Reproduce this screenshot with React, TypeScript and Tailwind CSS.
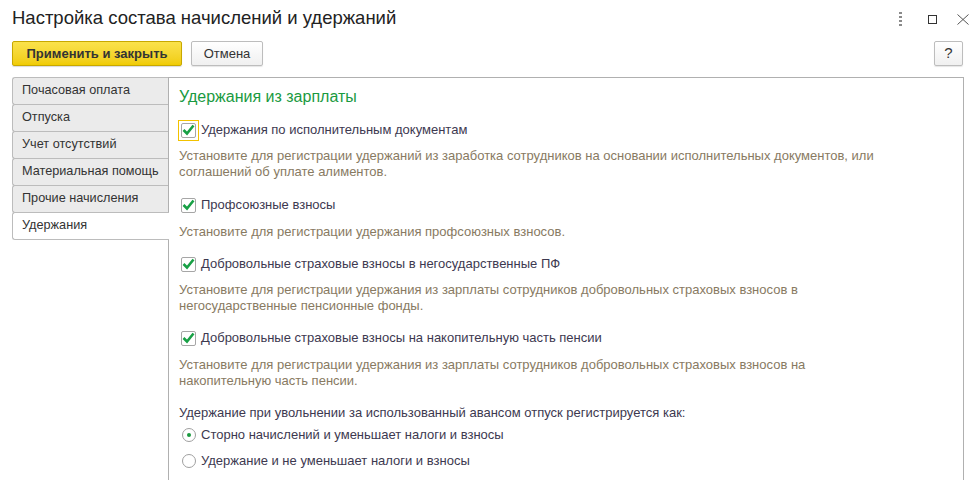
import React from "react";

const tabs = [
  "Почасовая оплата",
  "Отпуска",
  "Учет отсутствий",
  "Материальная помощь",
  "Прочие начисления",
  "Удержания",
];

const CheckBox = ({ focused }: { focused?: boolean }) => (
  <div
    className={`w-[21px] h-[21px] flex items-center justify-center border ${
      focused ? "border-[#f2c200]" : "border-transparent"
    }`}
  >
    <div className="w-[15px] h-[15px] rounded-[2px] border border-[#a6a6a6] bg-white flex items-center justify-center">
      <svg width="13" height="12" viewBox="0 0 13 12">
        <path d="M1.5 6 L5 9.5 L11.5 1.5" fill="none" stroke="#18a045" strokeWidth="2.6" />
      </svg>
    </div>
  </div>
);

const Radio = ({ checked }: { checked?: boolean }) => (
  <div className="w-[21px] h-[22px] flex items-center justify-center">
    <div className="w-[14px] h-[14px] rounded-full border border-[#9f9f9f] bg-white flex items-center justify-center">
      {checked && <div className="w-[4px] h-[4px] rounded-full bg-[#1a9a3f]" />}
    </div>
  </div>
);

const CheckRow = ({ label, focused }: { label: string; focused?: boolean }) => (
  <div className="flex items-center h-[22px] ml-[-1px]">
    <CheckBox focused={focused} />
    <span className="ml-[2px] text-[13px] leading-[16px] text-[#3d3950]">{label}</span>
  </div>
);

const Hint = ({ children, gap = "mt-[7px]" }: { children: React.ReactNode; gap?: string }) => (
  <p className={`${gap} text-[13px] leading-[16px] text-[#887a62] whitespace-nowrap`}>{children}</p>
);

export default function App() {
  return (
    <div className="w-[973px] h-[480px] overflow-hidden bg-white font-['Liberation_Sans',Arial,sans-serif]">
      {/* Header */}
      <div className="flex items-start justify-between h-[34px]">
        <h1 className="pl-[12px] pt-[6px] text-[18.5px] leading-[24px] text-[#222]">
          Настройка состава начислений и удержаний
        </h1>
        <div className="flex items-center pt-[12px] pr-[4px]">
          <div className="flex flex-col gap-[2px] w-[3px] mr-[26px]">
            <span className="w-[3px] h-[2px] bg-[#8a8a8a]" />
            <span className="w-[3px] h-[2px] bg-[#8a8a8a]" />
            <span className="w-[3px] h-[2px] bg-[#8a8a8a]" />
            <span className="w-[3px] h-[2px] bg-[#8a8a8a]" />
          </div>
          <div className="w-[9px] h-[9px] border border-[#333] mr-[20px]" />
          <svg width="12" height="11" viewBox="0 0 12 11">
            <path d="M0.5 0.5 L11.5 10.5 M11.5 0.5 L0.5 10.5" stroke="#555" strokeWidth="1" />
          </svg>
        </div>
      </div>

      {/* Command bar */}
      <div className="flex items-center h-[25px] mt-[7px] pl-[12px] pr-[10px]">
        <button className="h-[25px] w-[170px] rounded-[2px] border border-[#c8a800] bg-gradient-to-b from-[#fbe24a] to-[#f0cc00] text-[13px] font-bold text-[#333] shadow-[0_1px_1px_rgba(0,0,0,0.15)]">
          Применить и закрыть
        </button>
        <button className="ml-[9px] h-[25px] w-[72px] rounded-[2px] border border-[#bdbdbd] bg-gradient-to-b from-white to-[#f0f0f0] text-[13px] text-[#333] shadow-[0_1px_1px_rgba(0,0,0,0.1)]">
          Отмена
        </button>
        <button className="ml-auto h-[25px] w-[29px] rounded-[2px] border border-[#bdbdbd] bg-gradient-to-b from-white to-[#f0f0f0] text-[15px] text-[#333] shadow-[0_1px_1px_rgba(0,0,0,0.1)]">
          ?
        </button>
      </div>

      {/* Panel */}
      <div className="flex mt-[11px] pl-[12px]">
        <div className="w-[156px] shrink-0 flex flex-col">
          {tabs.map((t, i) => {
            const active = i === tabs.length - 1;
            return (
              <div
                key={t}
                className={`h-[28px] flex items-center pl-[9px] text-[12.7px] text-[#333] whitespace-nowrap rounded-l-[3px] border border-[#bcbcbc] border-r-0 ${
                  active ? "bg-white -mr-[1px] relative z-10" : "bg-[#ebebeb]"
                } ${i > 0 ? "-mt-[1px]" : ""}`}
              >
                {t}
              </div>
            );
          })}
        </div>

        <div className="w-[796px] h-[420px] border border-[#b0b0b0] pl-[10px] pt-[9px]">
          <h2 className="text-[16px] leading-[20px] text-[#1a9a3f]">Удержания из зарплаты</h2>

          <div className="mt-[12px]">
            <CheckRow label="Удержания по исполнительным документам" focused />
            <Hint>
              Установите для регистрации удержаний из заработка сотрудников на основании исполнительных документов, или
              <br />
              соглашений об уплате алиментов.
            </Hint>
          </div>

          <div className="mt-[14px]">
            <CheckRow label="Профсоюзные взносы" />
            <Hint gap="mt-[8px]">Установите для регистрации удержания профсоюзных взносов.</Hint>
          </div>

          <div className="mt-[13px]">
            <CheckRow label="Добровольные страховые взносы в негосударственные ПФ" />
            <Hint>
              Установите для регистрации удержания из зарплаты сотрудников добровольных страховых взносов в
              <br />
              негосударственные пенсионные фонды.
            </Hint>
          </div>

          <div className="mt-[13px]">
            <CheckRow label="Добровольные страховые взносы на накопительную часть пенсии" />
            <Hint gap="mt-[8px]">
              Установите для регистрации удержания из зарплаты сотрудников добровольных страховых взносов на
              <br />
              накопительную часть пенсии.
            </Hint>
          </div>

          <p className="mt-[16px] text-[13px] leading-[16px] text-[#3d3950]">
            Удержание при увольнении за использованный авансом отпуск регистрируется как:
          </p>
          <div className="mt-[3px] flex items-center h-[22px] ml-[-1px]">
            <Radio checked />
            <span className="ml-[2px] text-[13px] leading-[16px] text-[#3d3950]">
              Сторно начислений и уменьшает налоги и взносы
            </span>
          </div>
          <div className="mt-[4px] flex items-center h-[22px] ml-[-1px]">
            <Radio />
            <span className="ml-[2px] text-[13px] leading-[16px] text-[#3d3950]">
              Удержание и не уменьшает налоги и взносы
            </span>
          </div>
        </div>
      </div>
    </div>
  );
}
